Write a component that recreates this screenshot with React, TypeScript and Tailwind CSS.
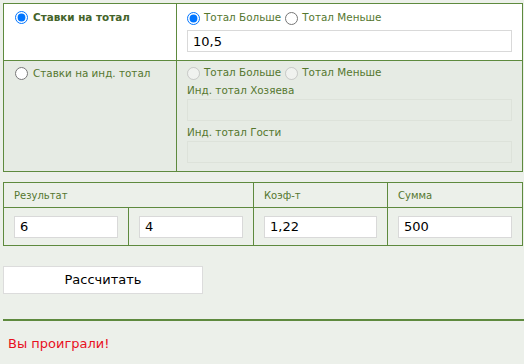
import React from 'react';

const font = { fontFamily: '"DejaVu Sans", Verdana, sans-serif' };

function Radio({ checked, disabled, name }: { checked?: boolean; disabled?: boolean; name: string }) {
  return (
    <input
      type="radio"
      name={name}
      defaultChecked={checked}
      disabled={disabled}
      className="m-0 h-[13px] w-[13px] shrink-0"
    />
  );
}

function Field({ value, disabled }: { value?: string; disabled?: boolean }) {
  return (
    <input
      type="text"
      defaultValue={value}
      disabled={disabled}
      className={`block h-[22px] w-full border px-[5px] text-[13px] text-black outline-none ${
        disabled ? 'border-[#dde2da] bg-[#e6ebe4]' : 'border-[#d9d9d9] bg-white'
      }`}
    />
  );
}

export default function App() {
  return (
    <div className="min-h-[364px] bg-[#ecf0ea] px-[3px] pt-[3px] text-[10.4px] text-[#55772f]" style={font}>
      {/* Total bets */}
      <div className="grid w-[520px] grid-cols-[173px_1fr] border border-[#5e8a3e]">
        <div className="flex h-[57px] items-start gap-[5px] border-r border-b border-[#5e8a3e] bg-white px-[11px] pt-[7px]">
          <Radio name="mode" checked />
          <span className="font-bold leading-[13px] text-[#44632a]">Ставки на тотал</span>
        </div>
        <div className="border-b border-[#5e8a3e] bg-white px-[10px] pt-[7px]">
          <div className="flex h-[14px] items-center gap-[4px]">
            <Radio name="total" checked />
            <span>Тотал Больше</span>
            <Radio name="total" />
            <span>Тотал Меньше</span>
          </div>
          <div className="mt-[5px]">
            <Field value="10,5" />
          </div>
        </div>

        <div className="flex h-[110px] items-start gap-[5px] border-r border-[#5e8a3e] bg-[#e6ebe4] px-[11px] pt-[6px]">
          <Radio name="mode" />
          <span className="leading-[13px]">Ставки на инд. тотал</span>
        </div>
        <div className="bg-[#e6ebe4] px-[10px] pt-[5px]">
          <div className="flex h-[14px] items-center gap-[4px]">
            <Radio name="ind" disabled />
            <span>Тотал Больше</span>
            <Radio name="ind" disabled />
            <span>Тотал Меньше</span>
          </div>
          <div className="mt-[1px] leading-[18px]">Инд. тотал Хозяева</div>
          <div>
            <Field disabled />
          </div>
          <div className="mt-[2px] leading-[18px]">Инд. тотал Гости</div>
          <div>
            <Field disabled />
          </div>
        </div>
      </div>

      {/* Result table */}
      <div className="mt-[10px] grid w-[520px] grid-cols-[125px_125px_134px_1fr] border border-[#5e8a3e]">
        <div className="col-span-2 flex h-[25px] items-center border-r border-b border-[#5e8a3e] px-[10px] text-[10px]">
          Результат
        </div>
        <div className="flex h-[25px] items-center border-r border-b border-[#5e8a3e] px-[10px] text-[10px]">
          Коэф-т
        </div>
        <div className="flex h-[25px] items-center border-b border-[#5e8a3e] px-[10px] text-[10px]">
          Сумма
        </div>
        <div className="flex h-[37px] items-center border-r border-[#5e8a3e] px-[10px]">
          <Field value="6" />
        </div>
        <div className="flex h-[37px] items-center border-r border-[#5e8a3e] px-[10px]">
          <Field value="4" />
        </div>
        <div className="flex h-[37px] items-center border-r border-[#5e8a3e] px-[10px]">
          <Field value="1,22" />
        </div>
        <div className="flex h-[37px] items-center px-[10px]">
          <Field value="500" />
        </div>
      </div>

      <button className="mt-[20px] block h-[28px] w-[200px] border border-[#dcdcdc] bg-white text-[13px] text-black">
        Рассчитать
      </button>

      <div className="mt-[25px] h-[2px] w-[521px] bg-[#5e8a3e]" />

      <div className="px-[5px] pt-[14px] text-[13px] leading-[18px] text-[#e8101e]">Вы проиграли!</div>
    </div>
  );
}
